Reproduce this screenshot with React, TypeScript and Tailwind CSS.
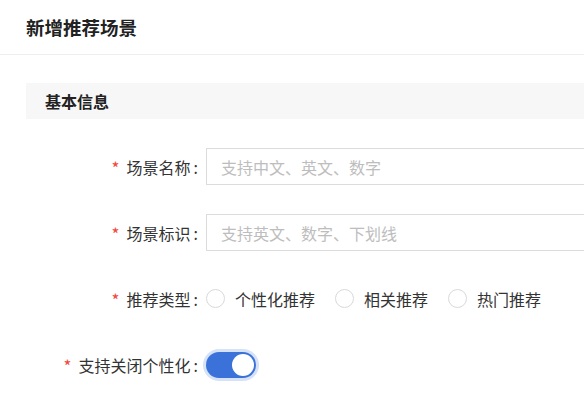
import { useState } from 'react';

const font = { fontFamily: '"Noto Sans CJK SC", "Noto Sans", sans-serif' };

function Label({ text }: { text: string }) {
  return (
    <div className="w-[198px] shrink-0 flex items-center justify-end text-[16px] text-[#333]">
      <span className="text-[#f5453d] mr-[7px] text-[17px] leading-none mt-[2px]">*</span>
      <span>{text}</span>
      <span className="ml-[3px]">:</span>
    </div>
  );
}

function Radio({ label }: { label: string }) {
  return (
    <label className="flex items-center gap-[10px] mr-[20px] text-[16px] text-[#333]">
      <span className="w-[19px] h-[19px] rounded-full border border-[#d9d9d9] bg-white" />
      <span>{label}</span>
    </label>
  );
}

export default function App() {
  const [on, setOn] = useState(true);

  return (
    <div className="w-[584px] h-[420px] bg-white overflow-hidden" style={font}>
      {/* Header */}
      <header className="h-[55px] border-b border-[#eeeeee] flex items-center pl-[26px]">
        <h1 className="text-[18.5px] font-semibold text-[#222] leading-none">新增推荐场景</h1>
      </header>

      {/* Section */}
      <section className="pt-[28px]">
        <div className="ml-[26px] h-[36px] bg-[#f7f7f7] flex items-center pl-[19px]">
          <span className="text-[16px] font-semibold text-[#222]">基本信息</span>
        </div>

        <div className="flex flex-col gap-[29px] mt-[29px]">
          <div className="flex h-[37px]">
            <Label text="场景名称" />
            <input
              className="ml-[8px] w-[420px] shrink-0 h-[37px] border border-[#dcdcdc] px-[14px] text-[16px] outline-none placeholder:text-[#bdbdbd]"
              placeholder="支持中文、英文、数字"
            />
          </div>

          <div className="flex h-[37px]">
            <Label text="场景标识" />
            <input
              className="ml-[8px] w-[420px] shrink-0 h-[37px] border border-[#dcdcdc] px-[14px] text-[16px] outline-none placeholder:text-[#bdbdbd]"
              placeholder="支持英文、数字、下划线"
            />
          </div>

          <div className="flex h-[37px]">
            <Label text="推荐类型" />
            <div className="ml-[8px] flex items-center">
              <Radio label="个性化推荐" />
              <Radio label="相关推荐" />
              <Radio label="热门推荐" />
            </div>
          </div>

          <div className="flex h-[37px]">
            <Label text="支持关闭个性化" />
            <div className="ml-[8px] flex items-center">
              <button
                onClick={() => setOn(!on)}
                className={`relative w-[50px] h-[26px] rounded-full ring-[3px] ring-[#d6e2f8] ${on ? 'bg-[#3a72da]' : 'bg-[#ccc]'}`}
              >
                <span
                  className={`absolute top-[2px] w-[22px] h-[22px] rounded-full bg-white ${on ? 'right-[2px]' : 'left-[2px]'}`}
                />
              </button>
            </div>
          </div>
        </div>
      </section>
    </div>
  );
}
